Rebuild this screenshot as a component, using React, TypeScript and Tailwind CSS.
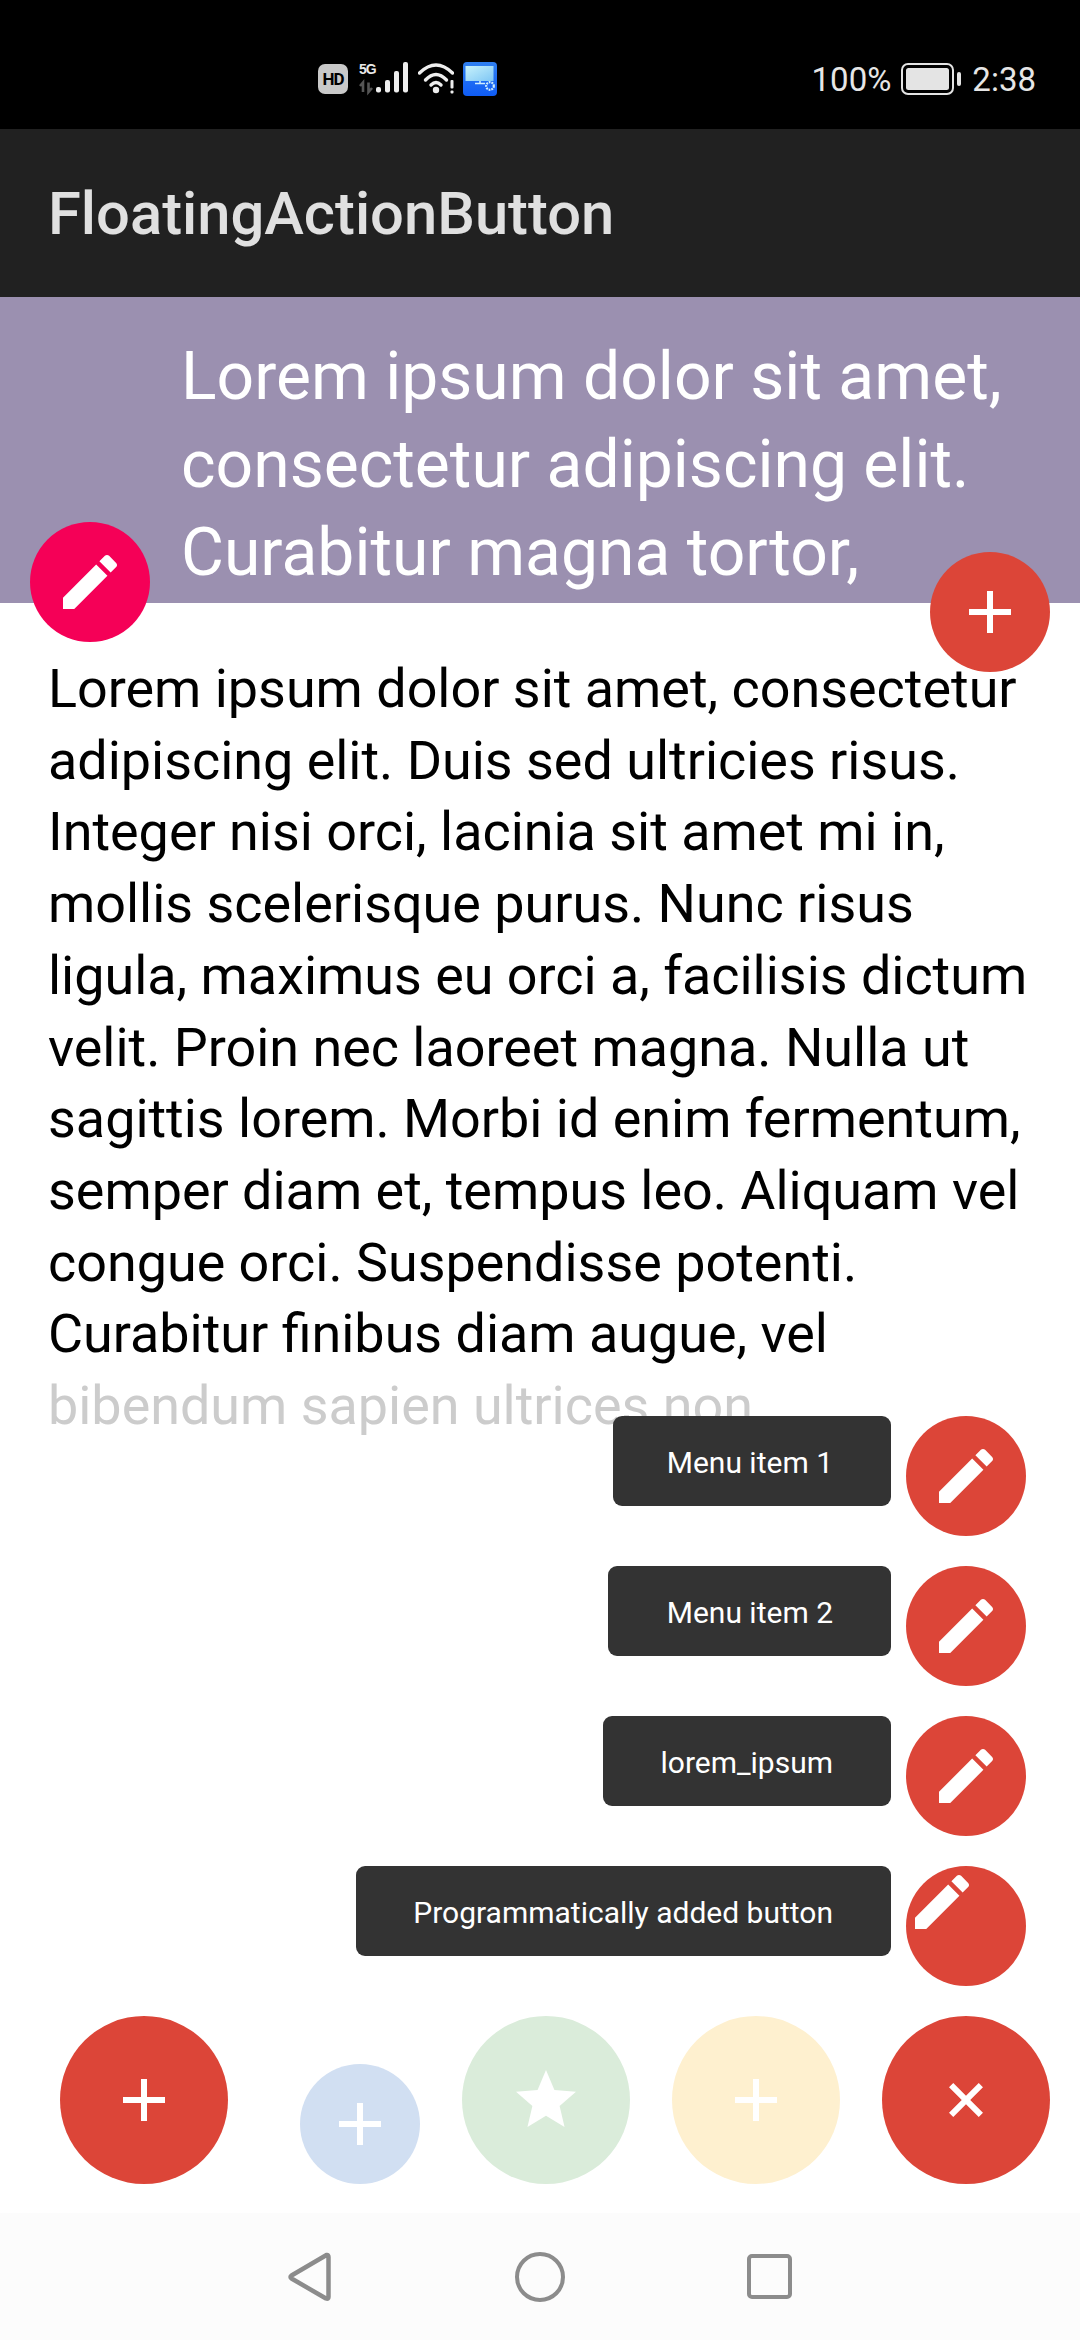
import React from "react";

const PENCIL = "M3 17.25V21h3.75L17.81 9.94l-3.75-3.75L3 17.25zM20.71 7.04c.39-.39.39-1.02 0-1.41l-2.34-2.34c-.39-.39-1.02-.39-1.41 0l-1.83 1.83 3.75 3.75 1.83-1.83z";
const PLUS = "M19 13h-6v6h-2v-6H5v-2h6V5h2v6h6v2z";
const STAR = "M12 17.27L18.18 21l-1.64-7.03L22 9.24l-7.19-.61L12 2 9.19 8.63 2 9.24l5.46 4.73L5.82 21z";

function Icon({ d, className = "" }: { d: string; className?: string }) {
  return (
    <svg viewBox="0 0 24 24" className={`w-[72px] h-[72px] fill-white ${className}`}>
      <path d={d} />
    </svg>
  );
}

function MenuRow({ label, width, topLeftIcon }: { label: string; width: string; topLeftIcon?: boolean }) {
  return (
    <div className="flex justify-end gap-[15px] h-[120px]">
      <div className={`${width} h-[90px] pr-[58px] pt-[3px] flex items-center justify-end rounded-[9px] bg-[#333333] text-white text-[30px] leading-none whitespace-nowrap`}>
        {label}
      </div>
      <div className={`w-[120px] h-[120px] rounded-full bg-[#DC4538] flex ${topLeftIcon ? "items-start justify-start" : "items-center justify-center"}`}>
        <Icon d={PENCIL} />
      </div>
    </div>
  );
}

function StatusIcons() {
  return (
    <div className="flex items-center">
      <div className="w-[30px] h-[30px] rounded-[7px] bg-[#c9c9c9] flex items-center justify-center text-black text-[17px] leading-none font-bold tracking-[-1px]">
        HD
      </div>
      <div className="relative w-[49px] h-[34px] ml-[11px]">
        <span className="absolute left-0 top-0 text-[#e8e8e8] text-[14px] leading-[15px] font-bold tracking-[-1px] [font-family:'Liberation_Sans',sans-serif]">5G</span>
        <svg viewBox="0 0 49 34" className="w-[49px] h-[34px]">
          <path d="M4 30V20.5L1 24M9.5 20.5V30L13 26" stroke="#555" strokeWidth="2.6" fill="none" />
          <rect x="17" y="25" width="5" height="5.5" rx="2" fill="#eee" />
          <rect x="26" y="18" width="5" height="12.5" rx="2" fill="#eee" />
          <rect x="35" y="9" width="5" height="21.5" rx="2" fill="#eee" />
          <rect x="44" y="0" width="5" height="30.5" rx="2" fill="#eee" />
        </svg>
      </div>
      <svg viewBox="0 0 36 34" className="w-[36px] h-[34px] ml-[10px]">
        <path d="M1.5 11 Q18 -5 34.5 11" stroke="#eee" strokeWidth="3.4" fill="none" strokeLinecap="round" />
        <path d="M7.5 18 Q18 7 28.5 18" stroke="#eee" strokeWidth="3.4" fill="none" strokeLinecap="round" />
        <path d="M13 23 Q18 18 23 23" stroke="#eee" strokeWidth="3.4" fill="none" strokeLinecap="round" />
        <circle cx="18" cy="28" r="3.2" fill="#eee" />
        <rect x="32.5" y="18" width="3" height="8.5" rx="1" fill="#eee" />
        <rect x="32.5" y="28.5" width="3" height="3" rx="1" fill="#eee" />
      </svg>
      <svg viewBox="0 0 34 34" className="w-[34px] h-[34px] ml-[9px]">
        <defs>
          <linearGradient id="bg" x1="0" y1="0" x2="0" y2="1">
            <stop offset="0" stopColor="#2f7ff0" />
            <stop offset="1" stopColor="#0f5cf5" />
          </linearGradient>
          <linearGradient id="sc" x1="0" y1="0" x2="1" y2="1">
            <stop offset="0" stopColor="#c8f2fb" />
            <stop offset="1" stopColor="#7ec6f5" />
          </linearGradient>
        </defs>
        <rect width="34" height="34" rx="4" fill="url(#bg)" />
        <rect x="2.5" y="4" width="28" height="15" fill="url(#sc)" />
        <path d="M12 21.5h10M17 19v2.5" stroke="#cfeeff" strokeWidth="1.5" />
        <circle cx="27" cy="24" r="3.8" stroke="#cfeeff" strokeWidth="2.2" strokeDasharray="1.8 0.9" fill="none" />
      </svg>
    </div>
  );
}

function Battery() {
  return (
    <svg viewBox="0 0 60 32" className="w-[60px] h-[32px]">
      <rect x="1" y="1" width="51" height="30" rx="6" stroke="#e4e4e4" strokeWidth="2" fill="none" />
      <rect x="5" y="5" width="43" height="22" rx="2.5" fill="#e4e4e4" />
      <rect x="56" y="9" width="4" height="14" rx="2" fill="#e4e4e4" />
    </svg>
  );
}

export default function App() {
  return (
    <div className="relative w-[1080px] h-[2340px] flex flex-col overflow-hidden bg-white [font-family:Roboto,sans-serif]">
      <div className="h-[129px] bg-black flex items-center justify-between pl-[318px] pr-[44px] pt-[29px] shrink-0">
        <StatusIcons />
        <div className="flex items-center text-[#e6e6e6] text-[33px] leading-none">
          <span>100%</span>
          <span className="ml-[10px]"><Battery /></span>
          <span className="ml-[11px]">2:38</span>
        </div>
      </div>

      <div className="h-[168px] bg-[#212121] flex items-center pl-[48px] pt-[3px] shrink-0">
        <span className="text-[59.7px] font-medium leading-none text-[#e0e0e0]">FloatingActionButton</span>
      </div>

      <div className="h-[306px] bg-[#9B90B0] pl-[181px] pr-[20px] pt-[36px] overflow-hidden shrink-0">
        <p className="text-white text-[66px] leading-[88px]">
          Lorem ipsum dolor sit amet, consectetur adipiscing elit. Curabitur magna tortor,
        </p>
      </div>

      <div className="flex-1 pl-[48px] pr-[49px] pt-[50px] overflow-hidden">
        <p className="text-black text-[53.9px] leading-[71.7px]">
          Lorem ipsum dolor sit amet, consectetur adipiscing elit. Duis sed ultricies risus. Integer nisi orci, lacinia sit amet mi in, mollis scelerisque purus. Nunc risus ligula, maximus eu orci a, facilisis dictum velit. Proin nec laoreet magna. Nulla ut sagittis lorem. Morbi id enim fermentum, semper diam et, tempus leo. Aliquam vel congue orci. Suspendisse potenti. Curabitur finibus diam augue, vel{" "}
          <span className="text-[#cccccc]">bibendum sapien ultrices non</span>
        </p>
      </div>

      <div className="h-[127px] bg-[#fcfcfc] flex items-center shrink-0 pl-[288px]">
        <svg viewBox="0 0 44 50" className="w-[44px] h-[50px]">
          <path d="M38.5 3 Q40.5 2.5 40.5 5 V45 Q40.5 47.5 38 46.5 L3.5 26.5 Q1.5 25 3.5 23.5 Z" stroke="#8c8c8c" strokeWidth="4.5" fill="none" strokeLinejoin="round" />
        </svg>
        <div className="w-[50px] h-[50px] rounded-full border-[4.5px] border-[#8c8c8c] ml-[183px]" />
        <div className="w-[45px] h-[45px] rounded-[5px] border-[4.5px] border-[#8c8c8c] ml-[182px]" />
      </div>

      <div className="absolute left-[30px] top-[522px] w-[120px] h-[120px] rounded-full bg-[#F50057] flex items-center justify-center">
        <Icon d={PENCIL} />
      </div>
      <div className="absolute left-[930px] top-[552px] w-[120px] h-[120px] rounded-full bg-[#DC4538] flex items-center justify-center">
        <Icon d={PLUS} />
      </div>

      <div className="absolute right-[54px] top-[1416px] flex flex-col gap-[30px]">
        <MenuRow label="Menu item 1" width="w-[278px]" />
        <MenuRow label="Menu item 2" width="w-[283px]" />
        <MenuRow label="lorem_ipsum" width="w-[288px]" />
        <MenuRow label="Programmatically added button" width="w-[535px]" topLeftIcon />
      </div>

      <div className="absolute left-[60px] top-[2016px] flex items-end">
        <div className="w-[168px] h-[168px] rounded-full bg-[#DC4538] flex items-center justify-center">
          <Icon d={PLUS} />
        </div>
        <div className="ml-[72px] w-[120px] h-[120px] rounded-full bg-[#D1DFF2] flex items-center justify-center">
          <Icon d={PLUS} />
        </div>
        <div className="ml-[42px] w-[168px] h-[168px] rounded-full bg-[#DAECDA] flex items-center justify-center">
          <Icon d={STAR} />
        </div>
        <div className="ml-[42px] w-[168px] h-[168px] rounded-full bg-[#FEF0CF] flex items-center justify-center">
          <Icon d={PLUS} />
        </div>
        <div className="ml-[42px] w-[168px] h-[168px] rounded-full bg-[#DC4538] flex items-center justify-center">
          <Icon d={PLUS} className="rotate-45" />
        </div>
      </div>
    </div>
  );
}
